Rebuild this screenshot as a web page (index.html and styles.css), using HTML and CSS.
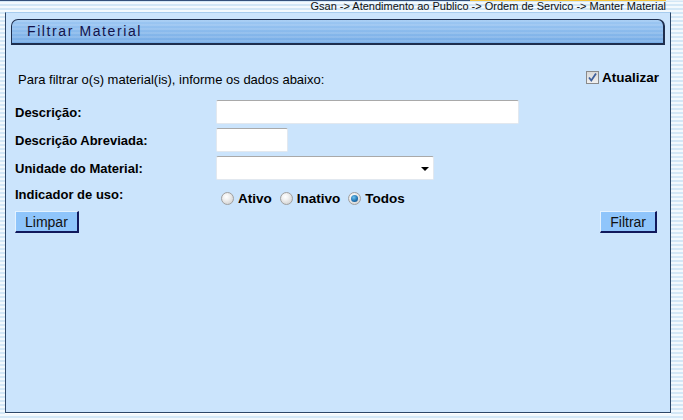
FILE: index.html
```html
<!DOCTYPE html>
<html lang="pt-BR">
<head>
    <meta charset="UTF-8">
    <title>Filtrar Material</title>
    <link rel="stylesheet" href="styles.css">
</head>
<body>

    <div class="breadcrumb">Gsan -&gt; Atendimento ao Publico -&gt; Ordem de Servico -&gt; Manter Material</div>

    <div class="panel">
        <div class="panel-title">Filtrar Material</div>

        <div class="intro">
            <span class="intro-text">Para filtrar o(s) material(is), informe os dados abaixo:</span>
            <label class="refresh">
                <span class="checkbox">
                    <svg width="13" height="13" viewBox="0 0 13 13">
                        <path d="M3 6.5 L5.3 9.5 L10 2.5" fill="none" stroke="#3d5f9c" stroke-width="1.8"/>
                    </svg>
                </span>
                Atualizar
            </label>
        </div>

        <div class="form-grid">
            <label class="field-label">Descrição:</label>
            <div><input type="text" class="text-input wide"></div>

            <label class="field-label">Descrição Abreviada:</label>
            <div><input type="text" class="text-input short"></div>

            <label class="field-label">Unidade do Material:</label>
            <div>
                <div class="select-box">
                    <span class="select-arrow"></span>
                </div>
            </div>

            <label class="field-label top">Indicador de uso:</label>
            <div class="radios">
                <label class="radio-item"><span class="radio"></span>Ativo</label>
                <label class="radio-item"><span class="radio"></span>Inativo</label>
                <label class="radio-item"><span class="radio checked"></span>Todos</label>
            </div>
        </div>

        <div class="actions">
            <button class="btn">Limpar</button>
            <button class="btn">Filtrar</button>
        </div>
    </div>

</body>
</html>
```

FILE: styles.css
```css
body {
    margin: 0;
    font-family: "Liberation Sans", Arial, sans-serif;
    color: #000;
    background: repeating-linear-gradient(to bottom, #d3e7f6 0, #d3e7f6 2px, #f3f9fd 2px, #f3f9fd 4px);
    height: 420px;
    overflow: hidden;
}
.breadcrumb {
    height: 10px;
    line-height: 10px;
    font-size: 11px;
    text-align: right;
    padding-right: 17px;
    border-top: 1px solid #34507a;
    border-image: linear-gradient(to right, #34507a 0, #34507a 470px, #f5c23a 470px, #f5c23a 666px, #e6f0f8 666px) 1 0 0 0;
    color: #111;
    overflow: hidden;
}
.panel {
    margin: 1px 0 0 5px;
    width: 664px;
    height: 399px;
    background-color: #cbe4fc;
    border: 1px solid #2d4768;
    border-top-color: #a7ccee;
    box-shadow: 0 1px 0 #ffffff;
}
.panel-title {
    margin: 6px 5px 0 5px;
    height: 23px;
    line-height: 23px;
    padding-left: 15px;
    font-size: 14px;
    letter-spacing: 1.6px;
    color: #12124a;
    border: 1px solid #1e2e4e;
    border-right-width: 2px;
    border-bottom-width: 2px;
    border-radius: 7px 7px 0 0;
    background:
        repeating-linear-gradient(to bottom, rgba(255,255,255,0.12) 0, rgba(255,255,255,0.12) 2px, transparent 2px, transparent 4px),
        linear-gradient(to bottom, #9ec8f3, #76ace6);
}
.intro {
    display: flex;
    justify-content: space-between;
    align-items: center;
    height: 20px;
    margin-top: 24px;
    padding: 0 11px 0 12px;
    font-size: 13px;
}
.refresh {
    display: flex;
    align-items: center;
    gap: 3px;
    font-weight: bold;
    font-size: 13.5px;
    margin-top: -3px;
}
.checkbox {
    display: inline-block;
    width: 11px;
    height: 11px;
    border: 1px solid #8a8a8a;
    background: linear-gradient(#d8d8d8, #f0f0f0);
    position: relative;
}
.checkbox svg {
    position: absolute;
    left: -1px;
    top: -1px;
}
.form-grid {
    display: grid;
    grid-template-columns: 201px 1fr;
    grid-auto-rows: 24px;
    row-gap: 4px;
    margin-top: 11px;
    padding-left: 9px;
}
.field-label {
    font-size: 13px;
    font-weight: bold;
    align-self: center;
}
.field-label.top {
    align-self: start;
    padding-top: 3px;
}
.text-input {
    box-sizing: border-box;
    height: 24px;
    border: 1px solid #e2e8ef;
    border-top-color: #a9a9a9;
    border-radius: 2px;
    background: #fff;
    padding: 0 3px;
    font-family: inherit;
    font-size: 13px;
}
.text-input.wide {
    width: 303px;
}
.text-input.short {
    width: 72px;
}
.select-box {
    position: relative;
    box-sizing: border-box;
    width: 218px;
    height: 24px;
    border: 1px solid #e2e8ef;
    border-top-color: #a9a9a9;
    border-radius: 2px;
    background: #fff;
}
.select-arrow {
    position: absolute;
    right: 4px;
    top: 10px;
    border-left: 4px solid transparent;
    border-right: 4px solid transparent;
    border-top: 4px solid #000;
}
.radios {
    display: flex;
    align-items: center;
    padding: 7px 0 0 5px;
    align-self: start;
}
.radio-item {
    display: flex;
    align-items: center;
    font-size: 13.5px;
    font-weight: bold;
    margin-right: 8px;
}
.radio {
    display: inline-block;
    box-sizing: border-box;
    width: 13px;
    height: 13px;
    border-radius: 50%;
    border: 1px solid #a0a0a0;
    background: radial-gradient(circle at 40% 35%, #ffffff 0, #f2f2f2 30%, #c8c8c8 100%);
    margin-right: 4px;
    position: relative;
}
.radio.checked::after {
    content: "";
    position: absolute;
    left: 2px;
    top: 2px;
    width: 7px;
    height: 7px;
    border-radius: 50%;
    background: radial-gradient(circle at 40% 35%, #6fc3f0 0, #1d6fae 60%, #0f3f70 100%);
}
.actions {
    display: flex;
    justify-content: space-between;
    margin-top: 3px;
    padding: 0 13px 0 9px;
}
.btn {
    height: 22px;
    padding: 0 9px;
    font-family: inherit;
    font-size: 14px;
    color: #111;
    background-color: #8fc5fb;
    border-style: solid;
    border-width: 1px 2px 2px 1px;
    border-color: #e4f2ff #11195c #11195c #e4f2ff;
    border-radius: 0;
    cursor: pointer;
}
```
